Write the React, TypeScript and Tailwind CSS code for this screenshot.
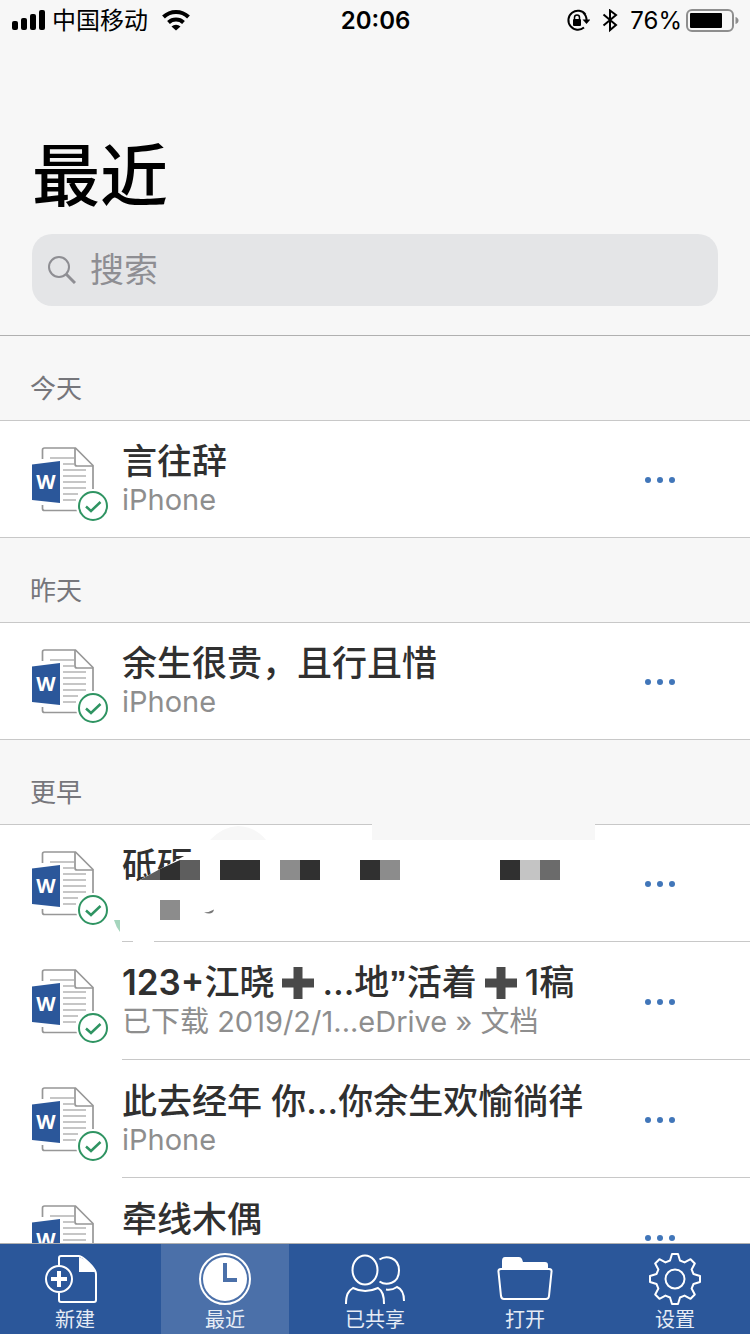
import React, { useState } from "react";

type DocItem = {
  title: React.ReactNode;
  label: string;
  location?: string;
  redacted?: boolean;
};

type DocGroup = {
  name: string;
  inset?: boolean;
  items: DocItem[];
};

// 标题里的加号表情
const Plus = () => (
  <svg className="mx-2 inline-block size-8 align-[-4px]" viewBox="0 0 32 32" role="img" aria-label="加号">
    <path d="M11.500 0h9v11.500H32v9H20.500V32h-9V20.500H0v-9h11.500z" fill="#4a4a4a" />
  </svg>
);

const groups: DocGroup[] = [
  { name: "今天", items: [{ title: "言往辞", label: "言往辞", location: "iPhone" }] },
  { name: "昨天", items: [{ title: "余生很贵，且行且惜", label: "余生很贵，且行且惜", location: "iPhone" }] },
  {
    name: "更早",
    inset: true,
    items: [
      { title: "砥砺", label: "砥砺", redacted: true },
      {
        title: (
          <>
            <span className="font-semibold">123+</span>江晓
            <Plus />
            …地<span className="font-['Liberation_Sans'] font-bold">”</span>活着
            <Plus />
            1稿
          </>
        ),
        label: "123+江晓",
        location: "已下载 2019/2/1...eDrive » 文档",
      },
      { title: "此去经年 你…你余生欢愉徜徉", label: "此去经年", location: "iPhone" },
      { title: "牵线木偶", label: "牵线木偶" },
    ],
  },
];

// 设置图标的齿轮轮廓，8 个齿
const gearPoints = Array.from({ length: 8 })
  .flatMap((_, i) => {
    const a = (i * Math.PI) / 4;
    return [
      [-5, -18.5],
      [-3, -25],
      [3, -25],
      [5, -18.5],
    ].map(([x, y]) => {
      const px = 32 + x * Math.cos(a) - y * Math.sin(a);
      const py = 29 + x * Math.sin(a) + y * Math.cos(a);
      return `${px.toFixed(2)},${py.toFixed(2)}`;
    });
  })
  .join(" ");

const tabs = [
  {
    name: "新建",
    icon: (
      <>
        <path d="M16 15V8q0-2 2-2h18c3 0 17 12 17 18v26q0 2-2 2H18q-2 0-2-2v-7" />
        <path d="M36 7v15h16C50 16 41 8 36 7z" fill="currentColor" stroke="none" />
        <circle cx="16" cy="29" r="13" />
        <path d="M16 21v16M8 29h16" strokeWidth="4" />
      </>
    ),
  },
  {
    name: "最近",
    icon: (
      <>
        <circle cx="32" cy="29" r="25" />
        <circle cx="32" cy="29" r="22" fill="currentColor" stroke="none" />
        <path d="M32 13v17h12" stroke="#4b70a9" strokeWidth="4" />
      </>
    ),
  },
  {
    name: "已共享",
    icon: (
      <>
        <ellipse cx="22" cy="20" rx="12.5" ry="14.5" />
        <path d="M36.500 9.500C43 5 56 7 56 20.500S43 36 36.500 31.500" />
        <path d="M3 54c0-9 2-13 7-16q12 6 25 0c5 3 6 8 6 16" />
        <path d="M43 39.500q6 1 11-2.500c5 2 7 7 7 14" />
      </>
    ),
  },
  {
    name: "打开",
    icon: (
      <>
        <path d="M9 19v-8q0-4 3-4h14q2 0 3 2l1 3h22q3 0 3 3v4z" fill="currentColor" stroke="none" />
        <path d="M8 19h48q3 0 2.500 3L56 46q-.3 3-3 3H11q-2.500 0-3-3L5.500 22Q5 19 8 19z" />
      </>
    ),
  },
  {
    name: "设置",
    icon: (
      <>
        <polygon points={gearPoints} strokeLinejoin="round" />
        <circle cx="32" cy="29" r="9.500" />
      </>
    ),
  },
];

const StatusBar = () => (
  <div className="grid h-[42px] grid-cols-[1fr_auto_1fr] items-center pr-[11px] pl-3 text-2xl leading-10 text-black">
    <div className="flex items-center">
      <svg className="h-6 w-[34px]" viewBox="0 0 34 24" aria-hidden="true">
        <rect x="0" y="12" width="6" height="9" rx="2" />
        <rect x="9" y="9" width="6" height="12" rx="2" />
        <rect x="18" y="5" width="6" height="16" rx="2" />
        <rect x="27" y="1" width="6" height="20" rx="2" />
      </svg>
      <span className="ml-[6px]">中国移动</span>
      <svg className="ml-3 h-6 w-8" viewBox="0 0 32 24" fill="none" stroke="#000" strokeWidth="4" aria-hidden="true">
        <path d="M3.500 8a18 18 0 0 1 25 0" />
        <path d="M8.500 13.500a11 11 0 0 1 15 0" />
        <path d="M16 21.500l-4.500-4a6.500 6.500 0 0 1 9 0z" fill="#000" stroke="none" />
      </svg>
    </div>
    <span className="font-semibold">20:06</span>
    <div className="flex items-center justify-end">
      <svg className="h-6 w-6" viewBox="0 1 24 24" aria-hidden="true">
        <path d="M19.500 6.500A9.500 9.500 0 1 0 18 19.500M17 4.500A9.500 9.500 0 0 1 20.500 12" fill="none" stroke="#000" strokeWidth="2" />
        <path d="M16.500 11.500h8L20.500 16z" />
        <rect x="7" y="11" width="8" height="7" rx="1" />
        <path d="M8.500 11V9.500a2.500 2.500 0 0 1 5 0V11" fill="none" stroke="#000" strokeWidth="1.500" />
      </svg>
      <svg className="ml-3 h-6 w-4" viewBox="0 0 16 24" fill="none" stroke="#000" strokeWidth="2" aria-hidden="true">
        <path d="M1.500 5.500l12.500 10.500L8 21V1.500L14 6 1.500 16.500" />
      </svg>
      <span className="ml-3">76%</span>
      <svg className="ml-1 h-6 w-[53px]" viewBox="0 0 53 24" aria-hidden="true">
        <rect x="1" y="1" width="46" height="21" rx="5" fill="none" stroke="#8e8e8e" strokeWidth="2" />
        <rect x="4" y="4" width="32" height="15" rx="1" />
        <path d="M49.500 8q3 1 3 3.500t-3 3.500z" fill="#8e8e8e" />
      </svg>
    </div>
  </div>
);

const WordDocIcon = () => (
  <svg className="h-20 w-[76px] shrink-0" viewBox="0 0 76 80" fill="none" aria-hidden="true">
    <g stroke="#979797" strokeWidth="1.700">
      <path d="M10.500 14V5q0-2 2-2H43.500L61 20.500V44M10.500 60v3.500q0 2 2 2H46" />
      <path d="M43 3v16q0 2 2 2h16" />
    </g>
    <path d="M18 13h24M31 19h11M31 25h23M31 31h23M31 37h23M31 43h23M31 49h15M31 55h13" stroke="#b4b4b4" strokeWidth="1.700" />
    <path d="M0 19.500L28 16v42L0 55z" fill="#2b579a" />
    <text x="14" y="44" textAnchor="middle" fontFamily="Noto Sans, sans-serif" fontSize="20" fontWeight="700" fill="#fff">
      W
    </text>
    <circle cx="61" cy="61" r="17" fill="#fff" />
    <circle cx="61" cy="61" r="14" stroke="#2f9462" strokeWidth="2" />
    <path d="M54 61.500l5 4.500 9.500-9" stroke="#2f9462" strokeWidth="2.500" />
  </svg>
);

// 遮住标题的马赛克
const Mosaic = () => (
  <svg className="pointer-events-none absolute -top-px left-[100px] h-[119px] w-[500px]" viewBox="100 824 500 119" aria-hidden="true">
    <path d="M372 824h223v16H372z" fill="#f7f7f7" />
    <path d="M210 840q12-13 28-14 18 1 28 14z" fill="#f7f7f7" />
    <path d="M136 882l50-27h20v32h-70z" fill="#fff" />
    <path d="M140 880l20-11v11zM180 860h20v20h-20z" fill="#5e5e5e" />
    <path d="M160 869l20-9v20h-20zM220 860h40v20h-40zM300 860h20v20h-20zM360 860h20v20h-20zM500 860h20v20h-20z" fill="#303030" />
    <path d="M280 860h20v20h-20zM380 860h20v20h-20zM160 900h20v20h-20z" fill="#8c8c8c" />
    <path d="M520 860h20v20h-20z" fill="#c4c4c4" />
    <path d="M540 860h20v20h-20z" fill="#6b6b6b" />
    <path d="M204 912.500q5 0 10-3-1 6-10 3z" fill="#777" />
    <path d="M114 920h6v12q-4-5-6-12z" fill="#a5d5bd" />
    <path d="M133 940h21v3h-21z" fill="#fff" />
  </svg>
);

const DocRow = ({ item, inset }: { item: DocItem; inset?: boolean }) => (
  <li
    className={`relative flex h-[118px] bg-white pl-8 first:h-[117px] ${inset ? "" : "border-b border-[#c8c8c8]"}`}
  >
    <div className={`flex items-end pb-3 ${inset ? "mb-px" : ""}`}>
      <WordDocIcon />
    </div>
    <div className={`ml-[14px] flex min-w-0 flex-1 items-end pb-3 ${inset ? "border-b border-[#c8c8c8]" : ""}`}>
      <div className="min-w-0 flex-1 pb-1">
        <h3 className="truncate text-[35px] leading-10 font-medium text-[#303030]">{item.title}</h3>
        <p className="h-10 truncate text-[29px] leading-[38px] text-[#8e8e8e]">{item.location}</p>
      </div>
      <button type="button" aria-label={`更多：${item.label}`} className="mr-[66px] flex h-[90px] w-12 items-center justify-center gap-[6px]">
        <span className="size-[6px] rounded-full bg-[#4176b9]" />
        <span className="size-[6px] rounded-full bg-[#4176b9]" />
        <span className="size-[6px] rounded-full bg-[#4176b9]" />
      </button>
    </div>
    {item.redacted && <Mosaic />}
  </li>
);

export default function App() {
  const [activeTab, setActiveTab] = useState("最近");
  const [keyword, setKeyword] = useState("");

  return (
    <div
      lang="zh-CN"
      className="flex h-screen flex-col overflow-hidden bg-[#f7f7f7] font-[Inter,'Noto_Sans_CJK_SC',sans-serif]"
    >
      <StatusBar />

      <header className="border-b border-[#b0b0b0] px-8 pt-[98px] pb-[29px]">
        <h1 className="text-[68px] leading-[72px] font-medium text-black">最近</h1>
        <label className="mt-[22px] flex h-[72px] items-center rounded-[20px] bg-[#e4e5e7] px-4">
          <svg className="size-7 shrink-0" viewBox="0 0 28 28" fill="none" stroke="#8e8e93" aria-hidden="true">
            <circle cx="11" cy="11" r="10" strokeWidth="2" />
            <path d="M18 18l9 9" strokeWidth="3" />
          </svg>
          <input
            type="search"
            aria-label="搜索"
            placeholder="搜索"
            value={keyword}
            onChange={(e) => setKeyword(e.target.value)}
            className="ml-[14px] min-w-0 flex-1 bg-transparent text-[34px] leading-[48px] text-black outline-none placeholder:text-[#8e8e93]"
          />
        </label>
      </header>

      <main className="min-h-0 flex-1 overflow-y-auto [scrollbar-width:none]">
        {groups.map((group) => (
          <section key={group.name}>
            <h2 className="flex h-[85px] items-end border-b border-[#c8c8c8] px-[30px] pb-[15px] text-[26px] leading-8 font-normal text-[#76767b]">
              {group.name}
            </h2>
            <ul>
              {group.items.map((item) => (
                <DocRow key={item.label} item={item} inset={group.inset} />
              ))}
            </ul>
          </section>
        ))}
      </main>

      {/* 底部导航 */}
      <nav className="grid grid-cols-5 border-t border-[#b0b0b0] bg-[#2b579a]">
        {tabs.map((tab) => (
          <button
            key={tab.name}
            type="button"
            onClick={() => setActiveTab(tab.name)}
            aria-current={activeTab === tab.name ? "page" : undefined}
            className={`mx-[11px] flex h-[90px] flex-col items-center pt-[6px] text-white ${activeTab === tab.name ? "bg-[#4b70a9]" : ""}`}
          >
            <svg className="h-14 w-16" viewBox="0 0 64 56" fill="none" stroke="currentColor" strokeWidth="2" aria-hidden="true">
              {tab.icon}
            </svg>
            <span className="text-xl leading-7 text-[#e6ecf5]">{tab.name}</span>
          </button>
        ))}
      </nav>
    </div>
  );
}
